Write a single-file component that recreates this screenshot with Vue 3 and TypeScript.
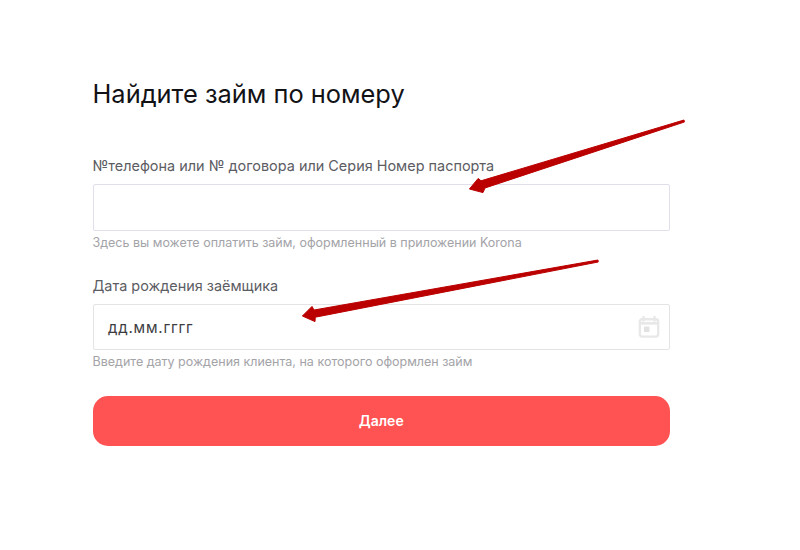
<script setup lang="ts">
const title = 'Найдите займ по номеру'
</script>

<template>
  <div class="page">
    <form class="form" @submit.prevent>
      <h1 class="title">{{ title }}</h1>
      <div class="field first">
        <label class="label">№телефона или № договора или Серия Номер паспорта</label>
        <div class="box"></div>
        <p class="hint">Здесь вы можете оплатить займ, оформленный в приложении Korona</p>
      </div>
      <div class="field second">
        <label class="label">Дата рождения заёмщика</label>
        <div class="box date">
          <span class="value">дд.мм.гггг</span>
          <svg class="cal" width="22" height="24" viewBox="0 0 24 25" fill="none">
            <path d="M6 1.5v4M18 1.5v4" stroke="#e8e8e8" stroke-width="2.6" stroke-linecap="round" />
            <rect x="2" y="4" width="20" height="19" rx="2.5" stroke="#e8e8e8" stroke-width="2.6" />
            <path d="M2 8.5h20" stroke="#e8e8e8" stroke-width="3" />
            <rect x="6.5" y="12" width="6" height="6" fill="#e2e2e2" />
          </svg>
        </div>
        <p class="hint">Введите дату рождения клиента, на которого оформлен займ</p>
      </div>
      <button class="submit" type="submit">Далее</button>
    </form>
    <svg class="arrows" width="800" height="550" viewBox="0 0 800 550">
      <path class="arrow" d="M684 120 L684.4 122 L485 188 L483 192.6 L469.4 189 L478.2 178.4 L481 180.8 Z" />
      <path class="arrow" d="M598 260 L598.2 262 L315.3 317.2 L315 321.6 L302.4 316 L312 306.4 L314 310 Z" />
    </svg>
  </div>
</template>

<style>
html, body { margin: 0; background: #fff; }
</style>

<style scoped>
.page {
  position: relative;
  width: 800px;
  height: 550px;
  overflow: hidden;
  background: #fff;
  font-family: Inter, "Liberation Sans", sans-serif;
}
.form {
  width: 577.5px;
  padding: 78px 0 0 92.5px;
}
.title {
  margin: 0;
  font-size: 25.4px;
  line-height: 32px;
  font-weight: 400;
  color: #121216;
}
.field { display: flex; flex-direction: column; }
.first { margin-top: 46px; }
.second { margin-top: 25px; }
.label {
  font-size: 14.45px;
  line-height: 20px;
  color: #5c5c63;
  margin-bottom: 8px;
  padding-top: 1px;
  margin-top: -1px;
}
.box {
  box-sizing: border-box;
  height: 47px;
  border: 1px solid #dfe0ea;
  border-radius: 2px;
  background: #fff;
}
.date {
  height: 46px;
  border-color: #e4e4e6;
  display: flex;
  align-items: center;
  justify-content: space-between;
  padding: 0 9px 0 14.5px;
}
.value {
  font-size: 15px;
  color: #3c3c40;
  letter-spacing: 0.8px;
}
.cal { flex: none; }
.hint {
  margin: 4px 0 0;
  font-size: 12.5px;
  line-height: 16px;
  color: #a3a3a8;
}
.submit {
  display: block;
  width: 100%;
  height: 50px;
  margin-top: 26px;
  padding: 0 0 2px;
  border: 0;
  border-radius: 15px;
  background: #ff5252;
  color: #fff;
  font-family: inherit;
  font-size: 14px;
  font-weight: 600;
}
.arrows {
  position: absolute;
  left: 0;
  top: 0;
  pointer-events: none;
}
.arrow {
  fill: #bb0000;
  stroke: #bb0000;
  stroke-width: 1;
  stroke-linejoin: round;
}
</style>
